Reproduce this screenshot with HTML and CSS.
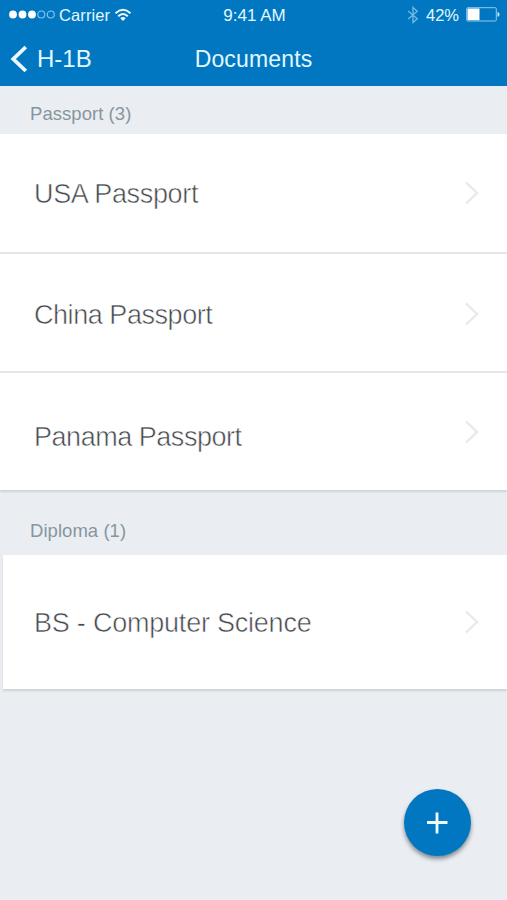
FILE: index.html
```html
<!DOCTYPE html>
<html lang="en">
<head>
<meta charset="utf-8">
<title>Documents</title>
<link rel="stylesheet" href="styles.css">
</head>
<body>
<header class="header">
  <div class="status">
    <div class="status-left">
      <svg class="signal" width="47" height="12" viewBox="0 0 47 12">
        <g fill="#fff"><circle cx="4" cy="5.5" r="3.9"/><circle cx="13.5" cy="5.5" r="3.9"/><circle cx="23" cy="5.5" r="3.9"/></g>
        <g fill="none" stroke="#8ac8ee" stroke-width="1.1"><circle cx="32.3" cy="5.5" r="3.5"/><circle cx="41.8" cy="5.5" r="3.5"/></g>
      </svg>
      <span class="carrier">Carrier</span>
      <svg class="wifi" width="18" height="14" viewBox="0 0 18 14" fill="none" stroke="#effbff" stroke-width="2">
        <path d="M1.5 5.2Q9 -1.6 16.5 5.2M4.2 8.2Q9 3.8 13.8 8.2"/>
        <path d="M6.3 10.2Q9 7.8 11.7 10.2L9 13z" fill="#effbff" stroke="none"/>
      </svg>
    </div>
    <span class="clock">9:41 AM</span>
    <div class="status-right">
      <svg class="bluetooth" width="12" height="18" viewBox="0 0 12 18" fill="none" stroke="#75b9e5" stroke-width="1.3"><path d="M1.2 5L10.2 12.8L6 16.5V1.5L10.2 5.2L1.2 13"/></svg>
      <span class="percent">42%</span>
      <svg class="battery" width="34" height="15" viewBox="0 0 34 15"><rect x=".7" y=".7" width="29.6" height="13.3" rx="1" fill="none" stroke="#8ecaee"/><path d="M1.5 1.5h12v11.7h-12z" fill="#fff"/><path d="M31.5 5q2 .2 2 2.4t-2 2.4z" fill="#c9e9fa"/></svg>
    </div>
  </div>
  <nav class="nav">
    <a class="back">
      <svg width="18" height="28" viewBox="0 0 18 28" fill="none" stroke="#ecfaff" stroke-width="3.8"><path d="M15.8 2L3.3 14L15.8 26"/></svg>
      <span class="back-label">H-1B</span>
    </a>
    <h1 class="title">Documents</h1>
  </nav>
</header>
<main>
  <h2 class="section section-first"><span>Passport (3)</span></h2>
  <ul class="list">
    <li class="row row-usa"><span class="name">USA Passport</span><svg class="chevron" width="14" height="24" viewBox="0 0 14 24"><path d="M1 1.5L12 12L1 22.5"/></svg></li>
    <li class="row row-china"><span class="name">China Passport</span><svg class="chevron" width="14" height="24" viewBox="0 0 14 24"><path d="M1 1.5L12 12L1 22.5"/></svg></li>
    <li class="row row-panama"><span class="name">Panama Passport</span><svg class="chevron" width="14" height="24" viewBox="0 0 14 24"><path d="M1 1.5L12 12L1 22.5"/></svg></li>
  </ul>
  <h2 class="section section-diploma"><span>Diploma (1)</span></h2>
  <ul class="list list-diploma">
    <li class="row row-diploma"><span class="name">BS - Computer Science</span><svg class="chevron" width="14" height="24" viewBox="0 0 14 24"><path d="M1 1.5L12 12L1 22.5"/></svg></li>
  </ul>
</main>
<button class="fab" aria-label="Add document"><svg width="21" height="22" viewBox="0 0 21 22" stroke="#f2fcff" stroke-width="2.8"><path d="M10 .5v21M0 10.5h20.5"/></svg></button>
</body>
</html>
```
FILE: styles.css
```css
* { box-sizing: border-box; }
body {
  margin: 0;
  height: 900px;
  overflow: hidden;
  background: #eaeef2;
  color: #45494d;
  font-family: "Liberation Sans", Arial, sans-serif;
}
svg { display: block; flex: none; }
.header {
  height: 86px;
  background: #0077c0;
  color: #e3f7ff;
}
.status, .nav {
  display: grid;
  grid-template-columns: 1fr auto 1fr;
  align-items: center;
}
.status { height: 29px; padding: 0 7px 0 9px; font-size: 16.5px; }
.status-left, .status-right { display: flex; align-items: center; }
.status-right { justify-content: flex-end; }
.carrier { margin-left: 3px; padding-top: 2px; letter-spacing: .1px; }
.clock { padding-top: 2px; font-size: 17px; }
.wifi { margin-left: 4px; }
.percent { margin: 0 7px; padding-top: 2px; }
.nav { height: 57px; padding: 2px 10px 0; }
.back { display: flex; align-items: center; gap: 9px; font-size: 24px; }
.title { margin: 0; padding-top: 2px; font-size: 23px; font-weight: 400; letter-spacing: .15px; }
.section {
  display: flex;
  align-items: center;
  margin: 0;
  padding-left: 30px;
  color: #87959f;
  font-size: 18.5px;
  font-weight: 400;
  letter-spacing: .05px;
}
.section-first { height: 48px; padding-top: 8px; }
.section-diploma { height: 65px; padding-top: 17px; }
.list {
  margin: 0;
  padding: 0;
  list-style: none;
  background: #fff;
  box-shadow: 0 2px 2px #cdd2d5;
}
.row {
  display: flex;
  align-items: center;
  justify-content: space-between;
  height: 119px;
  padding: 0 28px 0 34px;
  border-bottom: 2px solid #e4e6e7;
}
.row-usa { height: 120px; }
.row-usa .name { padding-top: 2px; }
.row-china { padding-top: 3px; }
.row-china .name { padding-top: 2px; letter-spacing: -.45px; }
.row-panama { height: 117px; border: 0; padding-top: 1px; }
.row-panama .name { padding-top: 10px; letter-spacing: -.47px; }
.list-diploma { margin-left: 3px; }
.row-diploma { height: 134px; padding-left: 31px; border: 0; }
.row-diploma .name { padding-top: 2px; letter-spacing: -.22px; }
.name {
  font-size: 27px;
  letter-spacing: -.33px;
  -webkit-text-stroke: .55px #fff;
}
.chevron { fill: none; stroke: #e7e9ea; stroke-width: 2.4; }
.fab {
  position: absolute;
  right: 36px;
  bottom: 44px;
  display: flex;
  align-items: center;
  justify-content: center;
  width: 67px;
  height: 67px;
  padding: 0;
  border: 0;
  border-radius: 50%;
  background: #0077c0;
  box-shadow: 0 3px 4px rgba(45, 55, 65, .55);
}
```
